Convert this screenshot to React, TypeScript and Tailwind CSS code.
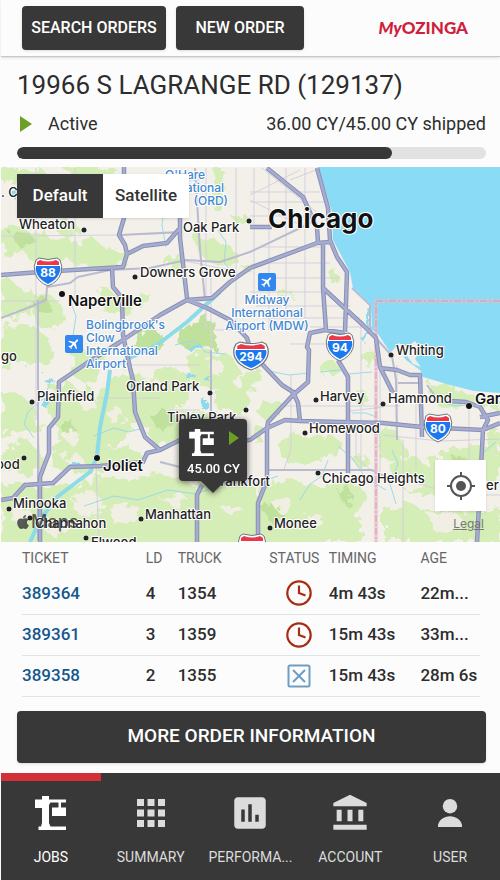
import { FaApple } from "react-icons/fa";
import { MdAccountBalance, MdApps, MdFlight, MdPoll } from "react-icons/md";

const TICKETS = [
  { ticket: "389364", load: 4, truck: "1354", status: "late", timing: "4m 43s", age: "22m..." },
  { ticket: "389361", load: 3, truck: "1359", status: "late", timing: "15m 43s", age: "33m..." },
  { ticket: "389358", load: 2, truck: "1355", status: "cancelled", timing: "15m 43s", age: "28m 6s" },
];

const PARKS = [
  "M1 168h40l6 6-8 4-38 4z",
  "M1 232l18-6 14 8 10-6 8 12 16-4 6 8 22-4 10 8 18 2 4 14-20 4-30-2-10-8-14 8-20-2-8-12-14 6-10-6z",
  "M60 168l20-2 30 2 14 8-20 6-26-4z",
  "M58 224l16-4 6 10-12 8-12-6z",
  "M1 284l10-4 8 8 14 2 6 8-8 10-12 8-18 6z",
  "M34 298l16-4 10 10 4 16-10 10-14-2-8-14z",
  "M96 290l12-2 8 8 14 2 8-8 14 6-4 8-18 4-14 8-12-4z",
  "M168 258l14-4 6 8-8 10-12-2z",
  "M196 238l16-2 8 8 14 4 4 12-12 6-18-6-10-8z",
  "M214 168h8l2 20-4 24-8-4 4-20z",
  "M232 218l14-4 6 8-10 6z",
  "M248 260l8 4-6 8-8-4z",
  "M330 274l8-3v12l-8-1z",
  "M280 292l12-2-2 6-10 2z",
  "M1 330l16-6 18 4 14 10 6 14-12 12-22-2-20 6z",
  "M72 352l16-6 14 6-4 22-12 10-14-8z",
  "M52 388l16-6 10 8 12-4 4 16-8 18-20 10-12-6-6-18z",
  "M1 396l14-4 14 10 12 16-6 14-18-2-16 8z",
  "M58 418l30-8 12-18 14-6 14 10 4 26-10 18-18 10-30-2-18-10z",
  "M100 396l14-20 14-4 18 6 14-10 22 2 10 12-4 20-16 6-10 14-20 4-16-4-20 12z",
  "M186 356l18-4 26 2 8 16-6 18-24 2-18-10z",
  "M214 392l18-8 14 4 6 14-16 10-20-4z",
  "M240 375l18-8 4 14-10 12-12-4z",
  "M150 418l28-10 20 6 20-2 6 16-14 10-26 2-26 6-12-14z",
  "M1 446l22-6 16 8 6 16-14 10-30-4z",
  "M52 446l28-6 14 10 30-4 16 6 2 12-30 6-28 4-32-6z",
  "M1 486l22-6 12 8 26-8 14 8 22-12 36 4 20-8 28 6 12 8 34-6 28 6 6 18 22 12 30-4 14 6v36H1z",
  "M256 412l14-12 14 4-2 12-14 6z",
  "M278 442l18-8 16 6 18-6 12 8-4 12-24 6-28 2z",
  "M254 424l10 4 0 14-12-2z",
  "M318 364l16-4 6 12-14 6z",
  "M352 394l12-4 6 10-12 8z",
  "M360 352l10-4 6 12-10 6z",
  "M262 486l30-8 30 10 16-8 22 6 8 16-14 14 8 10v16H262z",
  "M378 432l12-8 8 12 10 14-8 12-20-4z",
  "M430 384l24 4 26 10 20 2v10l-28-4-22 4-16-8z",
  "M390 464l20-6 14 4 16-8 30-8 30 2v24l-20 18-34 6-36-2-16-14z",
  "M384 508l24-4 20 8 18-4 30 6 24-6v34H384z",
  "M484 432l16-2v20l-12-4z",
  "M350 458l14-4 8 8-10 8z",
];

// the forest preserves are a shade darker than the rest of the green
const FORESTS = [
  "M186 326l24-10 4 20-2 12-24 2-12-8z",
  "M140 336l12-6 10 4-4 14-14 4-8-4z",
  "M150 416l14-6 14 6-6 10-16 2z",
  "M60 424l12-4 4 12-12 6z",
  "M262 508l14-6 8 12-12 10z",
  "M336 490l12-4 6 10-10 8z",
  "M440 462l18-6 14 6-8 12-18 2z",
  "M34 302l12-4 6 12-10 8z",
  "M10 234l18-2 8 10-16 6z",
];

// residential pockets that break up the green belt
const CLEARINGS = [
  "M10 510l16-4 8 10-12 8-12-4z",
  "M72 500l22-8 10 10-8 12-20-2z",
  "M110 508l20-6 12 8-8 12-20 2z",
  "M60 434l14-4 8 8-10 8z",
  "M106 412l14-4 6 10-14 6z",
  "M78 398l10-4 6 10-10 8z",
  "M142 382l14-4 8 8-12 8z",
  "M206 362l12-4 8 10-12 8z",
  "M60 456l16-4 8 8-12 6z",
  "M270 500l18-4 6 12-16 4z",
  "M300 518l16-6 10 8-10 8z",
  "M220 508l14-6 10 8-12 6z",
  "M430 516l24-4 12 10-14 10-20-2z",
  "M398 480l20-4 6 10-16 6z",
  "M40 526l20-6 10 10-14 8z",
  "M160 500l16-8 12 6-10 10z",
];

const LAKES = [
  "M70 460h8l-2 6h-6z",
  "M38 402l12-4 6 6-8 6z",
  "M48 378l6 2-3 6-5-3z",
  "M185 374l8-2 2 4-8 3z",
  "M200 402l8-1v5l-8 1z",
  "M204 375l5-1v7l-5-1z",
  "M14 192l4-2 2 8-6 2z",
  "M186 346l14-2 4 5-14 2z",
  "M366 312l5-2v16l-5 4z",
  "M361 340l8-12 3 3-7 12z",
];

const STREAMS = [
  "M220 292L187 322 157 345 115 365",
  "M110 370L107 393 100 427 97 457 90 472 57 497 40 520 30 542",
];

const CREEKS = [
  "M52 378l-8 20-16 14-4 12 10 14M70 300l6 16-3 20M160 175l6 20-4 30 4 22",
  "M84 506l30-10 24 4 30-10 28 4 32-12 20 4 30-10M94 436l20-8 14 4 16-4",
  "M309 373l-20 2-20-4M320 372l20-2 8 4 24-2M300 500l10-16 12-8 6-16",
  "M218 230l8 12-2 20 6 8M352 413l14 0 10 4M338 446l14 12 14 20 20 12M392 450l6 14-8 20 6 20",
  "M175 345l20-5 10 12 20 2M440 402l16 4 20-2M484 452l12-10",
];

const MINOR_ROADS = [
  "M36 168V420M38 420L40 477M96 445V468L99 542M75 168V300M206 168V330M211 275V430M236 168V330",
  "M254 168V300M269 168V330M286 168V320M305 168V330M291 375V450L284 469M361 320V470M397 365V440M403 440V542M416 400V470M469 400V460",
  "M1 301H60M1 236L120 235 180 233M20 180H200M250 192H320M250 202H325M250 216H325M260 247H322M268 263H330M260 278H340M250 292H322M256 306H350M262 318H360M310 327H378M290 344H345",
  "M200 410H170M100 398H160M130 365H200M280 406H400M383 407L350 411M383 435L440 441 500 439M356 430V458L370 469M380 368V480",
  "M250 200L300 225M262 168L320 215M290 180L316 170M250 195L300 170M180 260L230 270M215 330H250M300 470L275 470M392 476L440 490M470 495H500",
];

const SECONDARY_ROADS = [
  "M1 318L30 307 46 300 47 287 70 283 78 277 110 270 150 268 186 260 220 262 250 252",
  "M38 300V540M120 235L180 232M250 252L296 230 316 220",
  "M195 168L200 250 205 300M267 470H372L392 480M160 462L180 467M398 383H420M427 385L438 400M211 350V430",
  "M352 288L370 305 370 330M376 338L392 356 396 380 397 440",
];

const HIGHWAYS = [
  "M1 275L40 272 123 267 127 254 143 246 167 243 180 228",
  "M124 167V218L119 235 125 245 127 254",
  "M112 268L113 287 122 298 123 335 130 368 133 380 135 412 145 437 160 450",
  "M180 217V238L187 298",
  "M330 242L317 243 250 268 230 282 212 298 187 300 160 315 120 342 87 363 59 382 58 417 49 428 49 453 40 477V542",
  "M187 300L207 308 230 320 247 338 252 355 263 365 282 385 293 392 298 403 300 421",
  "M1 500L13 498 25 485 53 483 70 467 100 466 143 462 147 453 160 450 180 440 213 442 250 440 267 428 285 420 300 421 383 423 422 427 483 430 500 423",
  "M267 428L268 422 293 395 308 382 309 350 307 347 310 333 325 330 345 333",
  "M267 428V480L258 503V542M197 542V495L202 485",
  "M338 360L348 377V473",
  "M317 168L328 208 330 240 337 257 347 272 345 332",
  "M323 242V288L326 330M250 227H272",
  "M267 168L303 197 317 228 318 242M323 288L363 325 376 338 380 367 393 393",
  "M380 368L397 370 410 375 420 375 422 437M450 401L466 402 480 407 488 420 483 430 477 542M480 417L500 413",
];

const TOWNS = [
  { name: "Wheaton", x: 19, y: 229, dot: [84, 230] },
  { name: "Oak Park", x: 183, y: 232, dot: [249, 221] },
  { name: "Downers Grove", x: 140, y: 277, dot: [135, 277] },
  { name: "Plainfield", x: 37, y: 401, dot: [32, 402] },
  { name: "Orland Park", x: 126, y: 391, dot: [210, 393] },
  { name: "Tinley Park", x: 167, y: 422, dot: [246, 410] },
  { name: "Harvey", x: 320, y: 401, dot: [316, 400] },
  { name: "Homewood", x: 309, y: 433, dot: [305, 433] },
  { name: "Whiting", x: 396, y: 355, dot: [391, 355] },
  { name: "Hammond", x: 388, y: 403, dot: [383, 404] },
  { name: "Chicago Heights", x: 322, y: 483, dot: [318, 473] },
  { name: "Minooka", x: 13, y: 508, dot: [9, 509] },
  { name: "Channahon", x: 35, y: 528, dot: [30, 518] },
  { name: "Manhattan", x: 145, y: 519, dot: [141, 519] },
  { name: "Monee", x: 274, y: 528, dot: [270, 528] },
  { name: "Elwood", x: 91, y: 547, dot: [86, 538] },
  { name: "Frankfort", x: 213, y: 486, dot: [206, 476] },
  { name: ". C", x: 1, y: 197 },
  { name: "go", x: 1, y: 361 },
  { name: "ood", x: -4, y: 469, dot: [24, 458] },
  { name: "er", x: 486, y: 490 },
];

const CITIES = [
  { name: "Naperville", x: 68, y: 306, dot: [62, 294] },
  { name: "Joliet", x: 103, y: 471, dot: [97, 458] },
  { name: "Gary", x: 475, y: 404, dot: [469, 406] },
];

const SHIELDS = [
  { route: "88", x: 48, y: 271, wide: false },
  { route: "294", x: 251, y: 355, wide: true },
  { route: "94", x: 340, y: 346, wide: false },
  { route: "80", x: 438, y: 427, wide: false },
  { route: "57", x: 252, y: 547, wide: false },
];

const AIRPORTS = [
  { x: 258, y: 273, align: "middle", tx: 267, lines: ["Midway", "International", "Airport (MDW)"], ty: 304 },
  { x: 65, y: 335, align: "start", tx: 86, lines: ["Bolingbrook's", "Clow", "International", "Airport"], ty: 329 },
] as const;

const TABS = [
  { label: "JOBS", icon: <CraneIcon className="h-[34px] w-[31px]" />, active: true },
  { label: "SUMMARY", icon: <MdApps size={42} /> },
  { label: "PERFORMA...", icon: <MdPoll size={42} /> },
  { label: "ACCOUNT", icon: <MdAccountBalance size={40} /> },
  { label: "USER", icon: <PersonIcon /> },
];

function CraneIcon({ className }: { className?: string }) {
  return (
    <svg viewBox="0 0 31 34" className={className} fill="currentColor" aria-hidden="true">
      <path d="M0 3.500h7V0h7v3.500h17v3h-5v5h5V20H17v-8.500h6.500v-5h-8L14 9v18l1.500 3.500H31V34H3.500v-3.500H6L7 27V12H0z" />
    </svg>
  );
}

function PersonIcon() {
  return (
    <svg viewBox="0 0 24 28" className="h-7 w-6" fill="currentColor" aria-hidden="true">
      <circle cx="12" cy="7.200" r="7.200" />
      <path d="M0 28v-2C1 21 6 17.300 12 17.300S23 21 24 26v2z" />
    </svg>
  );
}

function LateIcon() {
  return (
    <svg viewBox="0 0 26 26" className="mx-auto size-[26px]" fill="none" stroke="#a82c12" strokeWidth="2.200" role="img" aria-label="Late">
      <circle cx="13" cy="13" r="11.700" />
      <path d="M13 5.500V13l6.500 2.500" />
    </svg>
  );
}

function CancelledIcon() {
  return (
    <svg viewBox="0 0 26 26" className="mx-auto size-[26px]" fill="none" stroke="#6d9fc4" strokeWidth="2" role="img" aria-label="Cancelled">
      <rect x="2.500" y="2.500" width="21" height="21" rx="1.500" />
      <path d="M7 7l12 12M19 7L7 19" />
    </svg>
  );
}

function Shield({ route, x, y, wide }: { route: string; x: number; y: number; wide: boolean }) {
  return (
    <g transform={`translate(${x} ${y})`}>
      <g transform={wide ? "scale(1.25 1)" : undefined}>
        <path d="M-9-13Q0-10 9-13L12-11Q15-5 13 2 10 11 0 15-10 11-13 2-15-5-12-11z" fill="#fff" stroke="#6f7682" strokeWidth="1" />
        <path d="M-12-5H12Q13-1 11 3 8 9 0 13-8 9-11 3-13-1-12-5z" fill="#1b78ee" />
        <path d="M-8-11Q0-8 8-11l3 2v3h-22v-3z" fill="#e8384a" />
      </g>
      <text x="0" y="6" textAnchor="middle" fill="#fff" className="text-[12px] font-bold">
        {route}
      </text>
    </g>
  );
}

function MapCanvas() {
  return (
    <svg viewBox="1 167 499 375" className="block h-auto w-full font-['Inter',sans-serif]" role="img" aria-label="Map of the Chicago area">
      <defs>
        <filter id="rough" x="0" y="0" width="1" height="1">
          <feTurbulence type="fractalNoise" baseFrequency="0.09" numOctaves="3" seed="4" />
          <feDisplacementMap in="SourceGraphic" scale="18" />
        </filter>
      </defs>
      <rect x="1" y="167" width="499" height="375" fill="#f3f0ea" />
      <g filter="url(#rough)">
        <rect x="1" y="167" width="499" height="375" fill="none" />
        <path d={PARKS.join("")} fill="#d5edb6" />
        <path d={FORESTS.join("")} fill="#bfe19b" />
        <path d={CLEARINGS.join("")} fill="#f1efe4" />
        <path d={LAKES.join("")} fill="#8fd9ee" />
      </g>
      <path d={MINOR_ROADS.join("")} fill="none" stroke="#d3d1dc" strokeWidth="1" />
      <path d={CREEKS.join("")} fill="none" stroke="#9cdbe4" strokeWidth="1" />
      <path d={STREAMS.join("")} fill="none" stroke="#8cdbe8" strokeWidth="4" strokeLinejoin="round" />
      <path d={SECONDARY_ROADS.join("")} fill="none" stroke="#bbbbd0" strokeWidth="2" />
      <path
        d="M318 167L332 212 333 240 350 272 353 288 371 305 372 330 378 334 390 352 398 350 406 360 420 370 423 377 450 385 474 391 500 393V167z"
        fill="#8adcf6"
      />
      <path d="M391 352l8-9 8 4 8-6 6 8-6 10 6 8-8-3-6-8-7 2z" fill="#f0eee8" />
      <path d="M500 301H376V542" fill="none" stroke="#e9bcc9" strokeWidth="4" opacity=".6" />
      <path d="M500 301H376V542" fill="none" stroke="#cf9cb4" strokeWidth="1" strokeDasharray="7 2 2 2" />
      <path d={HIGHWAYS.join("")} fill="none" stroke="#8a90b4" strokeWidth="4.500" strokeLinejoin="round" />
      <path d={HIGHWAYS.join("")} fill="none" stroke="#a6add0" strokeWidth="2.500" strokeLinejoin="round" />

      {SHIELDS.map((s) => (
        <Shield key={s.route} {...s} />
      ))}

      <g fill="#4387d0" stroke="#fff" strokeWidth="2" paintOrder="stroke" className="text-[12px] font-medium">
        <text x="165" y="179">O'Hare</text>
        <text x="224" y="192" textAnchor="end">International</text>
        <text x="228" y="205" textAnchor="end">(ORD)</text>
        {AIRPORTS.map((a) => (
          <g key={a.tx}>
            {a.lines.map((line, i) => (
              <text key={line} x={a.tx} y={a.ty + i * 13} textAnchor={a.align}>
                {line}
              </text>
            ))}
          </g>
        ))}
      </g>
      {AIRPORTS.map((a) => (
        <g key={a.tx} transform={`translate(${a.x} ${a.y})`}>
          <rect width="18" height="18" rx="2" fill="#3288ee" />
          <g transform="rotate(45 9 9)">
            <MdFlight x="2" y="2" size={14} color="#fff" />
          </g>
        </g>
      ))}

      <g fill="#222" stroke="#fff" strokeWidth="2" paintOrder="stroke" strokeLinejoin="round" className="text-[13px] font-medium">
        {TOWNS.map((t) => (
          <g key={t.name}>
            {t.dot && <circle cx={t.dot[0]} cy={t.dot[1]} r="2.500" strokeWidth="1" />}
            <text x={t.x} y={t.y}>{t.name}</text>
          </g>
        ))}
      </g>
      <g fill="#111" stroke="#fff" strokeWidth="2" paintOrder="stroke" strokeLinejoin="round" className="text-[15px] font-semibold">
        {CITIES.map((c) => (
          <g key={c.name}>
            <circle cx={c.dot[0]} cy={c.dot[1]} r="3" strokeWidth="1" />
            <text x={c.x} y={c.y}>{c.name}</text>
          </g>
        ))}
        <text x="268" y="228" className="text-[26px] font-bold">Chicago</text>
      </g>
    </svg>
  );
}

function OrderMap() {
  return (
    <section className="relative overflow-hidden">
      <MapCanvas />

      <div className="absolute top-[7px] left-4 flex h-11 bg-white text-[17px] font-medium shadow-sm">
        <button className="w-[86px] bg-[#383838] text-white">Default</button>
        <button className="w-[86px] text-[#333]">Satellite</button>
      </div>

      <button className="absolute top-[87%] left-[42.5%] flex -translate-x-1/2 -translate-y-full flex-col items-center drop-shadow-[0_1px_3px_rgba(0,0,0,0.6)]">
        <span className="flex h-[62px] w-[68px] flex-col justify-between rounded bg-[#383838] px-2 pt-2.5 pb-1 text-white">
          <span className="flex justify-between">
            <CraneIcon className="ml-0.5 h-[27px] w-[25px]" />
            <svg viewBox="0 0 10 14" className="mt-0.5 h-3.5 w-2.5" fill="#6b9f25" aria-hidden="true">
              <path d="M0 0l10 7-10 7z" />
            </svg>
          </span>
          <span className="text-center text-[13px] leading-4 font-medium whitespace-nowrap">45.00 CY</span>
        </span>
        <svg viewBox="0 0 24 12" className="h-3 w-6" fill="#383838" aria-hidden="true">
          <path d="M0 0h24L12 12z" />
        </svg>
      </button>

      <button aria-label="Center map" className="absolute right-3.5 bottom-[31px] flex size-[51px] items-center justify-center bg-white shadow">
        <svg viewBox="0 0 28 28" className="size-7" fill="none" stroke="#555" strokeWidth="2" aria-hidden="true">
          <circle cx="14" cy="14" r="10" />
          <circle cx="14" cy="14" r="5" fill="#555" stroke="none" />
          <path d="M14 0v5M14 23v5M0 14h5M23 14h5" />
        </svg>
      </button>

      <div className="absolute bottom-2 left-3.5 flex items-center font-['Inter',sans-serif] text-lg leading-6 font-medium text-[#333]/80">
        <FaApple size={16} />
        Maps
      </div>
      <a href="#legal" className="absolute right-4 bottom-2.5 font-['Inter',sans-serif] text-xs leading-4 text-[#777] underline">
        Legal
      </a>
    </section>
  );
}

function TicketTable() {
  return (
    <table className="w-full table-fixed text-left text-[17px] font-medium text-[#2d2d2d]">
      <colgroup>
        <col className="w-[27%]" />
        <col className="w-[7%]" />
        <col className="w-[20%]" />
        <col className="w-[13%]" />
        <col className="w-[20%]" />
        <col className="w-[13%]" />
      </colgroup>
      <thead className="text-sm text-[#666]">
        <tr className="h-[31px]">
          {["TICKET", "LD", "TRUCK", "STATUS", "TIMING", "AGE"].map((h) => (
            <th key={h} className="p-0 font-normal whitespace-nowrap">{h}</th>
          ))}
        </tr>
      </thead>
      <tbody>
        {TICKETS.map((t) => (
          <tr key={t.ticket} className="h-[41px] border-b border-[#e1e4e6] whitespace-nowrap">
            <td className="p-0">
              <a href={`#${t.ticket}`} className="text-[#14578c]">{t.ticket}</a>
            </td>
            <td className="p-0">{t.load}</td>
            <td className="p-0">{t.truck}</td>
            <td className="p-0">{t.status === "late" ? <LateIcon /> : <CancelledIcon />}</td>
            <td className="p-0">{t.timing}</td>
            <td className="p-0">{t.age}</td>
          </tr>
        ))}
      </tbody>
    </table>
  );
}

function BottomNav() {
  return (
    <nav className="grid grow grid-cols-5 bg-[#383838]">
      {TABS.map((tab) => (
        <button
          key={tab.label}
          className={`flex flex-col items-center border-t-8 pt-3 text-sm ${tab.active ? "border-[#d32f37] text-white" : "border-transparent text-[#dcdcdc]"}`}
        >
          <span className="flex h-10 items-center">{tab.icon}</span>
          <span className="mt-3.5 leading-5">{tab.label}</span>
        </button>
      ))}
    </nav>
  );
}

export default function App() {
  return (
    <div className="flex min-h-screen flex-col bg-[#fcfcfc] pl-px font-['Roboto',sans-serif] text-[#2d2d2d]">
      <header className="flex items-center border-b border-[#c8c8c8] pt-1.5 pr-8 pb-1.5 pl-[21px] shadow-sm">
        <button className="h-11 w-36 rounded-sm bg-[#383838] text-base font-medium text-white shadow">SEARCH ORDERS</button>
        <button className="ml-2.5 h-11 w-32 rounded-sm bg-[#383838] text-base font-medium text-white shadow">NEW ORDER</button>
        <div className="ml-auto font-['Lato',sans-serif] text-[17px] leading-5 font-black text-[#cf1f3c]">
          <span className="italic">My</span>OZINGA
        </div>
      </header>

      <section className="pt-3 pr-3.5 pb-2 pl-4">
        <h1 className="text-[26px] leading-8">19966 S LAGRANGE RD (129137)</h1>
        <div className="mt-[11px] flex items-center text-lg leading-6">
          <svg viewBox="0 0 12 16" className="ml-[3px] h-4 w-3" fill="#6b9f25" aria-hidden="true">
            <path d="M0 0l12 8-12 8z" />
          </svg>
          <span className="ml-4">Active</span>
          <span className="ml-auto">36.00 CY/45.00 CY shipped</span>
        </div>
        <div role="progressbar" aria-valuenow={80} aria-valuemin={0} aria-valuemax={100} aria-label="Shipped" className="mt-[11px] h-3 overflow-hidden rounded-full bg-[#e2e2e2]">
          <div className="h-full w-4/5 rounded-full bg-[#383838]" />
        </div>
      </section>

      <OrderMap />

      <div className="pr-5 pl-[21px]">
        <TicketTable />
      </div>

      <div className="pt-3.5 pr-3.5 pb-2.5 pl-4">
        <button className="h-[52px] w-full rounded-sm bg-[#383838] text-[19px] font-medium text-white shadow">MORE ORDER INFORMATION</button>
      </div>

      <BottomNav />
    </div>
  );
}
